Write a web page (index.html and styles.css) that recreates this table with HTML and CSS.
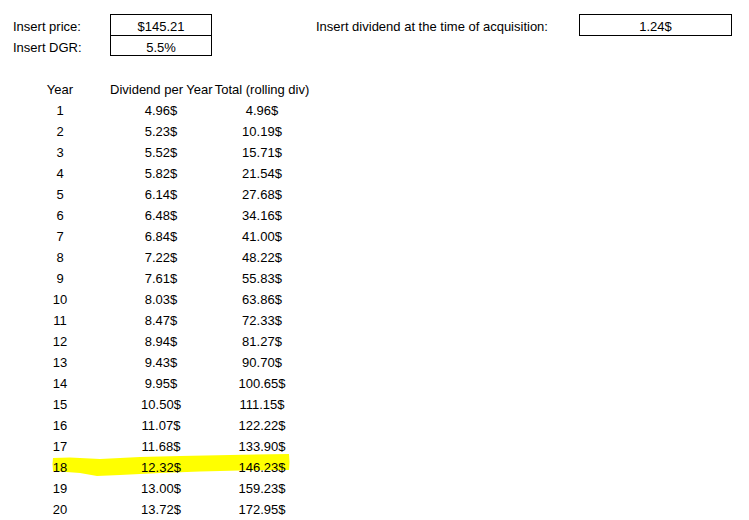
FILE: index.html
```html
<!DOCTYPE html>
<html>
<head>
<meta charset="utf-8">
<link rel="stylesheet" href="styles.css">
</head>
<body>
<div class="sheet">
  <div class="top">
    <div class="inputs">
      <div class="label">Insert price:</div><div class="box box-first">$145.21</div>
      <div class="label">Insert DGR:</div><div class="box box-next">5.5%</div>
    </div>
    <div class="dividend">
      <div class="label label-wide">Insert dividend at the time of acquisition:</div><div class="box box-single">1.24$</div>
    </div>
  </div>
  <div class="table">
    <svg class="marker" width="245" height="28" viewBox="0 0 245 28"><polygon fill="#ffff00" points="3,6 20,5.5 50,7 90,5 130,4 180,3 239,2 239.5,10 239,18 190,18.5 150,19.5 110,21 70,23 47,24 30,21 3,19 2.5,12"/></svg>
    <div class="row"><div>Year</div><div>Dividend per Year</div><div>Total (rolling div)</div></div>
    <div class="row"><div>1</div><div>4.96$</div><div>4.96$</div></div>
    <div class="row"><div>2</div><div>5.23$</div><div>10.19$</div></div>
    <div class="row"><div>3</div><div>5.52$</div><div>15.71$</div></div>
    <div class="row"><div>4</div><div>5.82$</div><div>21.54$</div></div>
    <div class="row"><div>5</div><div>6.14$</div><div>27.68$</div></div>
    <div class="row"><div>6</div><div>6.48$</div><div>34.16$</div></div>
    <div class="row"><div>7</div><div>6.84$</div><div>41.00$</div></div>
    <div class="row"><div>8</div><div>7.22$</div><div>48.22$</div></div>
    <div class="row"><div>9</div><div>7.61$</div><div>55.83$</div></div>
    <div class="row"><div>10</div><div>8.03$</div><div>63.86$</div></div>
    <div class="row"><div>11</div><div>8.47$</div><div>72.33$</div></div>
    <div class="row"><div>12</div><div>8.94$</div><div>81.27$</div></div>
    <div class="row"><div>13</div><div>9.43$</div><div>90.70$</div></div>
    <div class="row"><div>14</div><div>9.95$</div><div>100.65$</div></div>
    <div class="row"><div>15</div><div>10.50$</div><div>111.15$</div></div>
    <div class="row"><div>16</div><div>11.07$</div><div>122.22$</div></div>
    <div class="row"><div>17</div><div>11.68$</div><div>133.90$</div></div>
    <div class="row"><div>18</div><div>12.32$</div><div>146.23$</div></div>
    <div class="row"><div>19</div><div>13.00$</div><div>159.23$</div></div>
    <div class="row"><div>20</div><div>13.72$</div><div>172.95$</div></div>
  </div>
</div>
</body>
</html>
```

FILE: styles.css
```css
html, body {
  margin: 0;
  padding: 0;
  background: #fff;
}
body {
  font-family: "Liberation Sans", Arial, sans-serif;
  font-size: 13px;
  color: #000;
}
.sheet {
  padding-top: 14px;
}
.top {
  display: flex;
  align-items: flex-start;
}
.inputs {
  display: grid;
  grid-template-columns: 110px 102px;
  grid-auto-rows: 21px;
}
.label {
  padding-left: 13px;
  padding-top: 4px;
  line-height: 17px;
  white-space: nowrap;
  box-sizing: border-box;
  height: 21px;
}
.box {
  box-sizing: border-box;
  border: 1px solid #000;
  text-align: center;
  line-height: 17px;
  padding-top: 3px;
  height: 21px;
}
.box-first {
  border-bottom: none;
}
.box-single {
  height: 22px;
}
.dividend {
  display: grid;
  grid-template-columns: 263px 153px;
  margin-left: 104px;
}
.label-wide {
  padding-left: 0;
}
.table {
  position: relative;
  margin-top: 21px;
}
.marker {
  position: absolute;
  left: 50px;
  top: 375px;
  z-index: 0;
}
.row {
  position: relative;
  z-index: 1;
  display: grid;
  grid-template-columns: 110px 102px 100px;
  height: 21px;
}
.row > div {
  text-align: center;
  padding-top: 4px;
  line-height: 17px;
  white-space: nowrap;
}
.row > div:first-child {
  padding-left: 10px;
}
```
